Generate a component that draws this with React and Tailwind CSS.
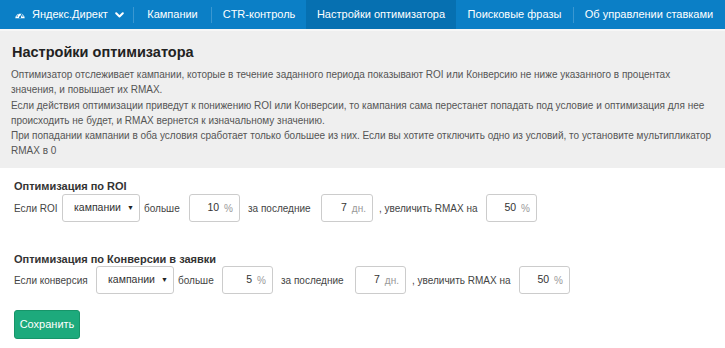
import React from 'react';

const FONT = { fontFamily: '"Liberation Sans", Arial, sans-serif' };

// Pieces of the top navigation bar
function NavSep() {
    return <div className="w-px h-[16px] bg-[#3a97d1] self-center" />;
}

function GaugeIcon() {
    return (
        <svg width="10" height="8" viewBox="0 0 10 8">
            <path d="M0.3 7.2 A4.7 4.7 0 1 1 9.7 7.2 Z" fill="#ffffff" />
            <circle cx="2.2" cy="5" r="0.75" fill="#0b7fc6" />
            <circle cx="3.2" cy="2.7" r="0.75" fill="#0b7fc6" />
            <circle cx="5" cy="1.9" r="0.75" fill="#0b7fc6" />
            <circle cx="7.8" cy="5" r="0.75" fill="#0b7fc6" />
            <path d="M5 6.4 L6.9 3" stroke="#0b7fc6" strokeWidth="1.1" strokeLinecap="round" />
            <circle cx="5" cy="6.2" r="1" fill="#0b7fc6" />
        </svg>
    );
}

function Chevron() {
    return (
        <svg width="9" height="6" viewBox="0 0 9 6">
            <path d="M1.2 1.2 L4.5 4.5 L7.8 1.2" stroke="#ffffff" strokeWidth="2" fill="none" strokeLinecap="round" strokeLinejoin="round" />
        </svg>
    );
}

function UnitInput({ value, unit, w = 'w-[51px]' }) {
    return (
        <div className={`${w} h-[28px] shrink-0 border border-[#cccccc] rounded-[3px] bg-white flex items-center justify-end pr-[6px] text-[10.5px]`}>
            <span className="text-[#333]">{value}</span>
            <span className="text-[#999] ml-[5px] text-[10px]">{unit}</span>
        </div>
    );
}

function SelectBox() {
    return (
        <div className="w-[78px] h-[28px] shrink-0 border border-[#cccccc] rounded-[3px] bg-white flex items-center pl-[11px] pr-[5px] text-[10.5px] text-[#333]">
            <span className="flex-1">кампании</span>
            <span className="text-[7px] text-[#222]">▼</span>
        </div>
    );
}

// w: widths of the text cells, so every box lands where it should
function Row({ label, value, w }) {
    return (
        <div className="flex items-center text-[10px] text-[#444] h-[28px]">
            <span className={`${w[0]} shrink-0`}>{label}</span>
            <SelectBox />
            <span className={`${w[1]} shrink-0 pl-[4px]`}>больше</span>
            <UnitInput value={value} unit="%" />
            <span className={`${w[2]} shrink-0 pl-[8px]`}>за последние</span>
            <UnitInput value="7" unit="дн." w={w[3]} />
            <span className={`${w[4]} shrink-0 pl-[6px]`}>, увеличить RMAX на</span>
            <UnitInput value="50" unit="%" />
        </div>
    );
}

export default function App() {
    return (
        <div className="w-[725px] h-[348px] bg-white overflow-hidden" style={FONT}>
            {/* Top navigation */}
            <div className="h-[29px] bg-[#0b7fc6] flex text-white text-[11px]">
                <div className="w-[133px] flex items-center pl-[15px]">
                    <GaugeIcon />
                    <span className="ml-[7px]">Яндекс.Директ</span>
                    <span className="ml-[7px] flex items-center"><Chevron /></span>
                </div>
                <NavSep />
                <div className="w-[77px] flex items-center justify-center">Кампании</div>
                <NavSep />
                <div className="w-[94px] flex items-center justify-center">CTR-контроль</div>
                <div className="w-[150px] flex items-center justify-center bg-[#0670b1]">Настройки оптимизатора</div>
                <div className="w-[117px] flex items-center justify-center">Поисковые фразы</div>
                <NavSep />
                <div className="w-[150px] flex items-center justify-center">Об управлении ставками</div>
            </div>
            <div className="h-[2px] bg-[#f7f7f7]" />

            {/* Description band */}
            <div className="h-[137px] bg-[#efefef] px-[12px] pt-[12px]">
                <h1 className="text-[14.5px] font-bold text-[#222] leading-[18px]">Настройки оптимизатора</h1>
                <div className="mt-[6px] text-[10px] leading-[15.3px] text-[#555] whitespace-nowrap -ml-px">
                    <div>Оптимизатор отслеживает кампании, которые в течение заданного периода показывают ROI или Конверсию не ниже указанного в процентах</div>
                    <div>значения, и повышает их RMAX.</div>
                    <div>Если действия оптимизации приведут к понижению ROI или Конверсии, то кампания сама перестанет попадать под условие и оптимизация для нее</div>
                    <div>происходить не будет, и RMAX вернется к изначальному значению.</div>
                    <div>При попадании кампании в оба условия сработает только большее из них. Если вы хотите отключить одно из условий, то установите мультипликатор</div>
                    <div>RMAX в 0</div>
                </div>
            </div>

            {/* Settings form */}
            <div className="px-[14px] pt-[12px]">
                <h2 className="text-[11px] font-bold text-[#333] leading-[13px]">Оптимизация по ROI</h2>
                <div className="mt-[1px]">
                    <Row label="Если ROI" value="10" w={['w-[48px]', 'w-[49px]', 'w-[81px]', 'w-[52px]', 'w-[113px]']} />
                </div>

                <h2 className="mt-[31px] text-[11px] font-bold text-[#333] leading-[13px]">Оптимизация по Конверсии в заявки</h2>
                <Row label="Если конверсия" value="5" w={['w-[82px]', 'w-[48px]', 'w-[82px]', 'w-[51px]', 'w-[113px]']} />

                <button className="mt-[16px] w-[66px] h-[29px] rounded-[3px] bg-[#1daa7c] border border-[#179569] text-white text-[11px]">
                    Сохранить
                </button>
            </div>
        </div>
    );
}
